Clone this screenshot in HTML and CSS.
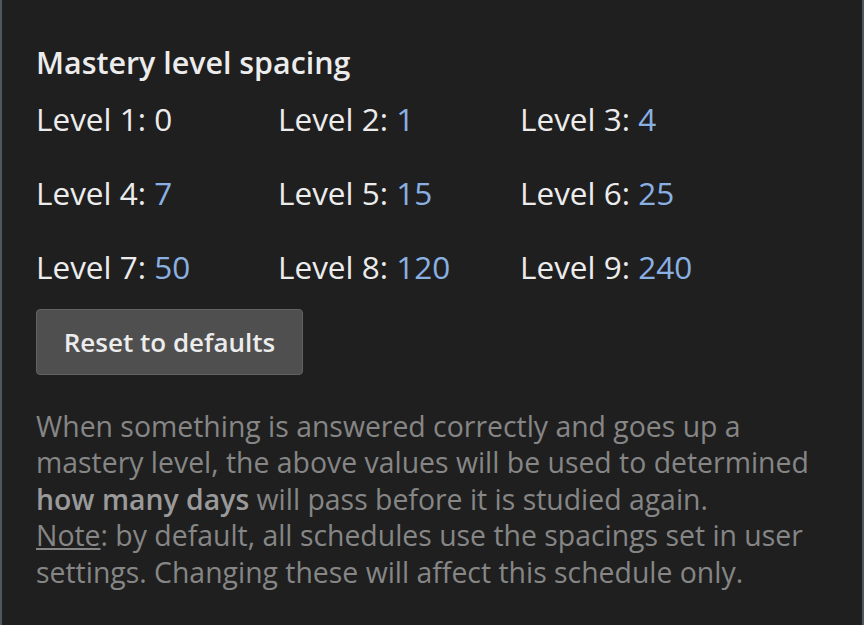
FILE: index.html
```html
<!DOCTYPE html>
<html lang="en">
<head>
    <meta charset="UTF-8">
    <meta name="viewport" content="width=device-width, initial-scale=1.0">
    <title>Mastery level spacing</title>
    <link rel="stylesheet" href="styles.css">
</head>
<body>
    <div class="panel">
        <h2 class="panel-title">Mastery level spacing</h2>
        <div class="level-grid">
            <div class="level">Level 1: <span class="level-value plain">0</span></div>
            <div class="level">Level 2: <span class="level-value">1</span></div>
            <div class="level">Level 3: <span class="level-value">4</span></div>
            <div class="level">Level 4: <span class="level-value">7</span></div>
            <div class="level">Level 5: <span class="level-value">15</span></div>
            <div class="level">Level 6: <span class="level-value">25</span></div>
            <div class="level">Level 7: <span class="level-value">50</span></div>
            <div class="level">Level 8: <span class="level-value">120</span></div>
            <div class="level">Level 9: <span class="level-value">240</span></div>
        </div>
        <button class="reset-btn">Reset to defaults</button>
        <p class="help-text">
            When something is answered correctly and goes up a mastery level, the above values will be used to determined
            <b>how many days</b> will pass before it is studied again.<br>
            <u>Note</u>: by default, all schedules use the spacings set in user settings. Changing these will affect this schedule only.
        </p>
    </div>
</body>
</html>
```

FILE: styles.css
```css
body {
    margin: 0;
    padding: 0;
    background-color: #1f1f1f;
    font-family: "Open Sans", sans-serif;
    color: #ececec;
}
.panel {
    box-sizing: border-box;
    height: 625px;
    padding: 43px 34px 0 34px;
    border-left: 2px solid #4c5963;
    border-right: 2px solid #4c5963;
    background-color: #1f1f1f;
}
.panel-title {
    margin: 0;
    font-size: 30.4px;
    font-weight: 600;
    line-height: 40px;
}
.level-grid {
    display: grid;
    grid-template-columns: 242px 242px 242px;
    row-gap: 34px;
    margin-top: 16px;
}
.level {
    font-size: 31.5px;
    line-height: 40px;
}
.level-value {
    color: #8ab0e2;
}
.level-value.plain {
    color: #ececec;
}
.reset-btn {
    display: block;
    width: 267px;
    height: 66px;
    margin-top: 22px;
    background-color: #4f4f4f;
    border: 1px solid #626262;
    border-radius: 4px;
    color: #ececec;
    font-family: "Open Sans", sans-serif;
    font-size: 26px;
    font-weight: 600;
}
.help-text {
    margin: 33px 0 0 0;
    font-size: 28.4px;
    line-height: 36.4px;
    color: #868686;
}
.help-text b {
    font-weight: 600;
    color: #9a9a9a;
}
```
